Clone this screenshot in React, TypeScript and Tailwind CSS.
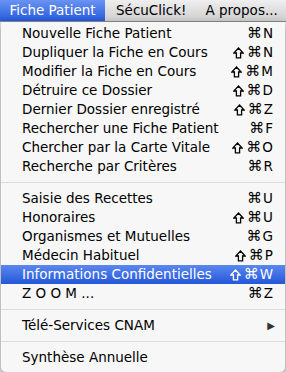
import React from "react";

type Item =
  | { type: "item"; label: string; shortcut?: string; shift?: boolean; active?: boolean; submenu?: boolean }
  | { type: "sep" };

const items: Item[] = [
  { type: "item", label: "Nouvelle Fiche Patient", shortcut: "N" },
  { type: "item", label: "Dupliquer la Fiche en Cours", shortcut: "N", shift: true },
  { type: "item", label: "Modifier la Fiche en Cours", shortcut: "M", shift: true },
  { type: "item", label: "Détruire ce Dossier", shortcut: "D", shift: true },
  { type: "item", label: "Dernier Dossier enregistré", shortcut: "Z", shift: true },
  { type: "item", label: "Rechercher une Fiche Patient", shortcut: "F" },
  { type: "item", label: "Chercher par la Carte Vitale", shortcut: "O", shift: true },
  { type: "item", label: "Recherche par Critères", shortcut: "R" },
  { type: "sep" },
  { type: "item", label: "Saisie des Recettes", shortcut: "U" },
  { type: "item", label: "Honoraires", shortcut: "U", shift: true },
  { type: "item", label: "Organismes et Mutuelles", shortcut: "G" },
  { type: "item", label: "Médecin Habituel", shortcut: "P", shift: true },
  { type: "item", label: "Informations Confidentielles", shortcut: "W", shift: true, active: true },
  { type: "item", label: "Z O O M ...", shortcut: "Z" },
  { type: "sep" },
  { type: "item", label: "Télé-Services CNAM", submenu: true },
  { type: "sep" },
  { type: "item", label: "Synthèse Annuelle" },
];

function ShiftIcon() {
  return (
    <svg width="11" height="12" viewBox="0 0 11 12" className="mr-[3px]">
      <path
        d="M5.5 1 L10.2 6 H7.6 V10.8 H3.4 V6 H0.8 Z"
        fill="none"
        stroke="currentColor"
        strokeWidth="1.3"
        strokeLinejoin="miter"
      />
    </svg>
  );
}

export default function App() {
  return (
    <div
      className="relative w-[286px] h-[372px] overflow-hidden bg-[#e4e4e4] text-black"
      style={{ fontFamily: '"DejaVu Sans", "Liberation Sans", sans-serif' }}
    >
      {/* menu bar */}
      <div className="flex h-[22px] items-stretch border-b border-[#8a8a8a] bg-gradient-to-b from-[#efefef] to-[#cfcfcf] text-[13.5px] whitespace-nowrap">
        <div className="flex items-center justify-center w-[105px] bg-gradient-to-b from-[#6a93f2] to-[#2559dc] text-white">
          Fiche Patient
        </div>
        <div className="flex items-center pl-[11px] pr-[10px]">SécuClick!</div>
        <div className="flex items-center pl-[9px]">A propos...</div>
      </div>

      {/* menu */}
      <div className="absolute left-[1px] top-[22px] w-[284px] rounded-b-[5px] bg-[#f7f7f7] pt-[2px] pb-[5px] shadow-[0_3px_8px_rgba(0,0,0,0.35)] text-[13.5px]">
        {items.map((it, i) =>
          it.type === "sep" ? (
            <div key={i} className="h-[13px] flex items-center">
              <div className="h-px w-full bg-[#dcdcdc]" />
            </div>
          ) : (
            <div
              key={i}
              className={
                "flex h-[19px] items-center pl-[21px] pr-[12px] " +
                (it.active ? "bg-gradient-to-b from-[#5b87ef] to-[#2457d9] text-white" : "")
              }
            >
              <span className="flex-1 whitespace-nowrap">{it.label}</span>
              {it.shortcut && (
                <span className="flex items-center whitespace-nowrap">
                  {it.shift && <ShiftIcon />}
                  <span className="text-[15px] leading-none mr-[1px]">⌘</span>
                  <span>{it.shortcut}</span>
                </span>
              )}
              {it.submenu && <span className="text-[10px] text-[#333] mr-[-2px]">▶</span>}
            </div>
          )
        )}
      </div>
    </div>
  );
}
